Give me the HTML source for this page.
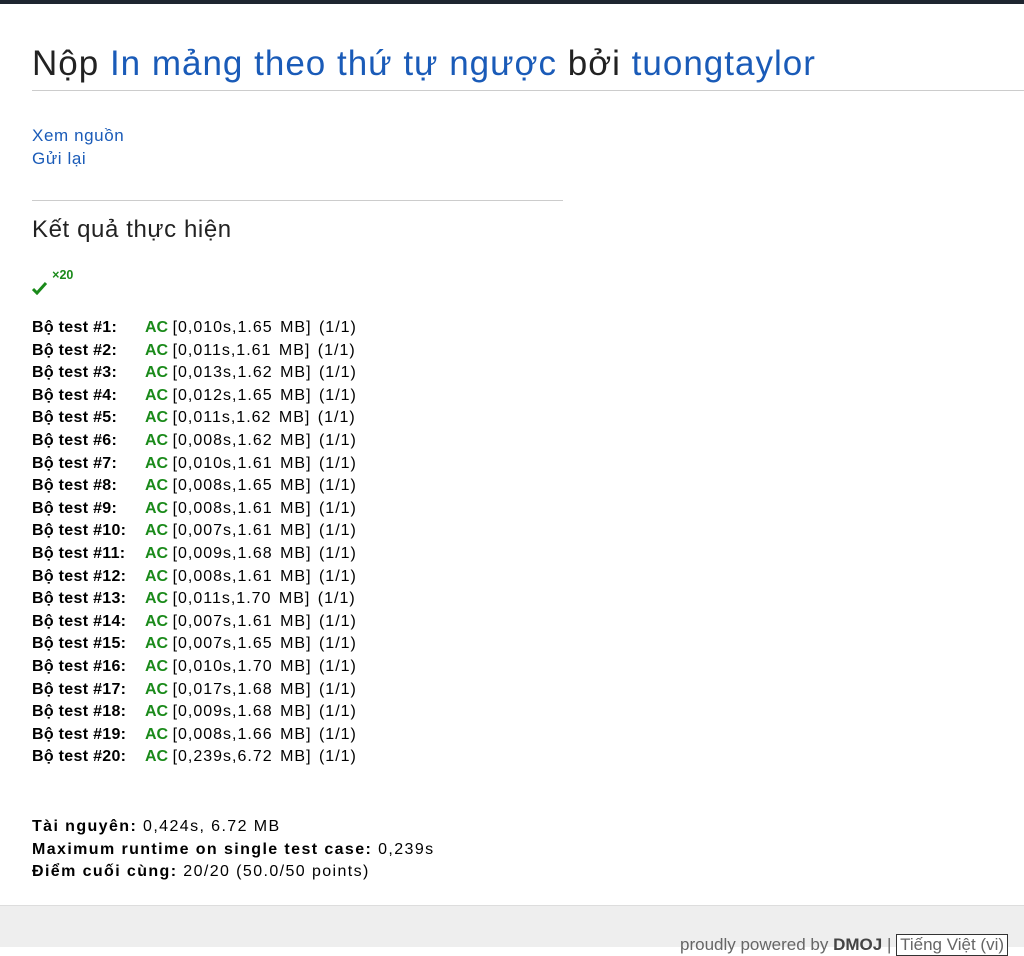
<!DOCTYPE html>
<html><head><meta charset="utf-8"><style>
body{margin:0;background:#fff;font-family:"Liberation Sans",sans-serif;color:#000;width:1024px;height:947px;overflow:hidden;position:relative}
.top{height:4px;background:#1e2530}
h1{position:absolute;left:32px;top:44px;margin:0;font-weight:normal;font-size:35px;color:#222;white-space:nowrap;letter-spacing:1px}
h1 a{color:#1a5bb8;text-decoration:none}
.hr1{position:absolute;left:32px;right:0;top:90px;border-top:1px solid #ccc}
.links{position:absolute;left:32px;top:124px;font-size:17px;line-height:23px;color:#1a5bb8;letter-spacing:0.6px}
.hr2{position:absolute;left:32px;width:531px;top:200px;border-top:1px solid #ccc}
h2{position:absolute;left:32px;top:216px;margin:0;font-weight:normal;font-size:24px;color:#222;letter-spacing:0.6px}
.chk{position:absolute;left:32px;top:268px;color:#1a8a1a;font-size:15px;font-weight:bold}
.rows{position:absolute;left:32px;top:317px;font-size:16px;line-height:22.6px;white-space:nowrap}
.rows b.l{display:inline-block;width:113px;letter-spacing:0.3px}
.rows .t{letter-spacing:1px;word-spacing:2px}
.ac{color:#1a8a1a;font-weight:bold}
.sum{position:absolute;left:32px;top:816px;font-size:16px;line-height:22.5px;letter-spacing:1.4px;white-space:nowrap}
.foot{position:absolute;left:0;right:0;top:905px;bottom:0;background:#eee;border-top:1px solid #ddd}
.foot span{position:absolute;left:680px;top:28px;font-size:17px;color:#666;white-space:nowrap}
.sel{display:inline-block;border:1px solid #333;background:#fff;color:#000;padding:0 3px}
</style></head><body>
<div class="top"></div>
<h1>Nộp <a>In mảng theo thứ tự ngược</a> bởi <a>tuongtaylor</a></h1>
<div class="hr1"></div>
<div class="links">Xem nguồn<br>Gửi lại</div>
<div class="hr2"></div>
<h2>Kết quả thực hiện</h2>
<div class="chk"><svg width="16" height="14" viewBox="0 0 16 14" style="vertical-align:-10px"><path d="M1 8l4 4 9-10" stroke="#1a8a1a" stroke-width="3" fill="none"/></svg> <sup>×20</sup></div>
<div class="rows">
<b class="l">Bộ test #1:</b><span class="ac">AC</span> <span class="t">[0,010s,1.65 MB] (1/1)</span><br>
<b class="l">Bộ test #2:</b><span class="ac">AC</span> <span class="t">[0,011s,1.61 MB] (1/1)</span><br>
<b class="l">Bộ test #3:</b><span class="ac">AC</span> <span class="t">[0,013s,1.62 MB] (1/1)</span><br>
<b class="l">Bộ test #4:</b><span class="ac">AC</span> <span class="t">[0,012s,1.65 MB] (1/1)</span><br>
<b class="l">Bộ test #5:</b><span class="ac">AC</span> <span class="t">[0,011s,1.62 MB] (1/1)</span><br>
<b class="l">Bộ test #6:</b><span class="ac">AC</span> <span class="t">[0,008s,1.62 MB] (1/1)</span><br>
<b class="l">Bộ test #7:</b><span class="ac">AC</span> <span class="t">[0,010s,1.61 MB] (1/1)</span><br>
<b class="l">Bộ test #8:</b><span class="ac">AC</span> <span class="t">[0,008s,1.65 MB] (1/1)</span><br>
<b class="l">Bộ test #9:</b><span class="ac">AC</span> <span class="t">[0,008s,1.61 MB] (1/1)</span><br>
<b class="l">Bộ test #10:</b><span class="ac">AC</span> <span class="t">[0,007s,1.61 MB] (1/1)</span><br>
<b class="l">Bộ test #11:</b><span class="ac">AC</span> <span class="t">[0,009s,1.68 MB] (1/1)</span><br>
<b class="l">Bộ test #12:</b><span class="ac">AC</span> <span class="t">[0,008s,1.61 MB] (1/1)</span><br>
<b class="l">Bộ test #13:</b><span class="ac">AC</span> <span class="t">[0,011s,1.70 MB] (1/1)</span><br>
<b class="l">Bộ test #14:</b><span class="ac">AC</span> <span class="t">[0,007s,1.61 MB] (1/1)</span><br>
<b class="l">Bộ test #15:</b><span class="ac">AC</span> <span class="t">[0,007s,1.65 MB] (1/1)</span><br>
<b class="l">Bộ test #16:</b><span class="ac">AC</span> <span class="t">[0,010s,1.70 MB] (1/1)</span><br>
<b class="l">Bộ test #17:</b><span class="ac">AC</span> <span class="t">[0,017s,1.68 MB] (1/1)</span><br>
<b class="l">Bộ test #18:</b><span class="ac">AC</span> <span class="t">[0,009s,1.68 MB] (1/1)</span><br>
<b class="l">Bộ test #19:</b><span class="ac">AC</span> <span class="t">[0,008s,1.66 MB] (1/1)</span><br>
<b class="l">Bộ test #20:</b><span class="ac">AC</span> <span class="t">[0,239s,6.72 MB] (1/1)</span>
</div>
<div class="sum"><b>Tài nguyên:</b> 0,424s, 6.72 MB<br><b>Maximum runtime on single test case:</b> 0,239s<br><b>Điểm cuối cùng:</b> 20/20 (50.0/50 points)</div>
<div class="foot"><span>proudly powered by <b style="color:#444">DMOJ</b> | <span class="sel" style="position:static">Tiếng Việt (vi)</span></span></div>
</body></html>
